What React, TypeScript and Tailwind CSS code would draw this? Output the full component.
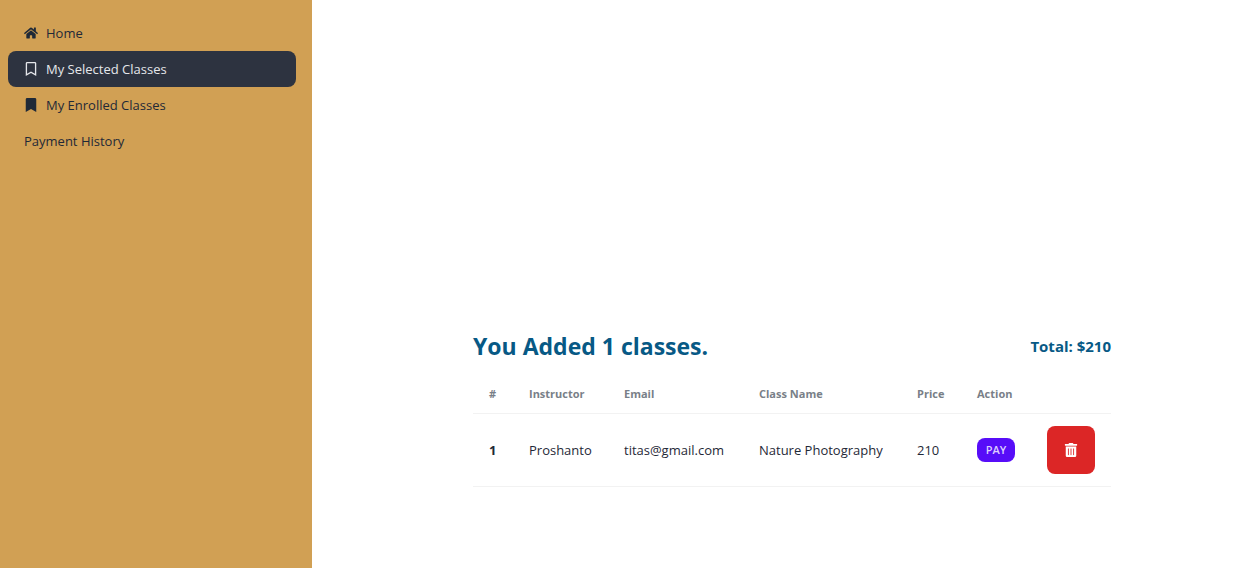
import type { ReactNode } from "react";
import { FaBookmark, FaHome, FaRegBookmark, FaTrashAlt } from "react-icons/fa";

type NavItem = { label: string; icon?: ReactNode; active?: boolean };

const navItems: NavItem[] = [
  { label: "Home", icon: <FaHome size={14} /> },
  { label: "My Selected Classes", icon: <FaRegBookmark size={14} />, active: true },
  { label: "My Enrolled Classes", icon: <FaBookmark size={14} /> },
  { label: "Payment History" },
];

const classes = [
  { instructor: "Proshanto", email: "titas@gmail.com", name: "Nature Photography", price: 210 },
];

function Sidebar() {
  return (
    <aside className="w-78 shrink-0 bg-[#d1a054] py-[15px] pr-4 pl-2">
      <nav>
        <ul className="flex flex-col">
          {navItems.map((item) => (
            <li key={item.label}>
              <a
                href="#"
                className={
                  item.active
                    ? "flex items-center gap-2 rounded-lg bg-[#2d3340] px-4 py-2 text-[#e5e7eb]"
                    : "flex items-center gap-2 rounded-lg px-4 py-2 text-[#1f2937]"
                }
              >
                {item.icon}
                {item.label}
              </a>
            </li>
          ))}
        </ul>
      </nav>
    </aside>
  );
}

export default function App() {
  const total = classes.reduce((sum, item) => sum + item.price, 0);

  return (
    <div className="flex min-h-screen bg-white font-['Open_Sans',sans-serif] text-[13px] leading-5 text-[#1f2937]">
      <Sidebar />
      <main className="flex flex-1 items-start justify-center pt-82 pl-[27px]">
        <section>
          <div className="flex items-center justify-between pb-2.5 font-bold text-[#075985]">
            <h1 className="text-[23px] leading-9">You Added {classes.length} classes.</h1>
            <p className="text-[15px]">Total: ${total}</p>
          </div>
          <table className="w-[638px] table-fixed text-left whitespace-nowrap">
            <colgroup>
              <col className="w-10" />
              <col className="w-[95px]" />
              <col className="w-[135px]" />
              <col className="w-[158px]" />
              <col className="w-15" />
              <col className="w-[70px]" />
              <col className="w-20" />
            </colgroup>
            <thead className="text-[11px] leading-4 text-[#797f88]">
              <tr className="border-b border-[#f2f2f2]">
                <th className="px-4 pt-3 pb-[11px]">#</th>
                <th className="px-4 pt-3 pb-[11px]">Instructor</th>
                <th className="px-4 pt-3 pb-[11px]">Email</th>
                <th className="px-4 pt-3 pb-[11px]">Class Name</th>
                <th className="px-4 pt-3 pb-[11px]">Price</th>
                <th className="px-4 pt-3 pb-[11px]">Action</th>
                <th aria-label="Delete" />
              </tr>
            </thead>
            <tbody>
              {classes.map((item, index) => (
                <tr key={item.email} className="border-b border-[#f2f2f2]">
                  <th className="px-4 py-3">{index + 1}</th>
                  <td className="px-4 py-3">{item.instructor}</td>
                  <td className="px-4 py-3">{item.email}</td>
                  <td className="px-4 py-3">{item.name}</td>
                  <td className="px-4 py-3">{item.price}</td>
                  <td className="px-4 py-3">
                    <button
                      type="button"
                      className="flex h-6 w-[38px] items-center justify-center rounded-lg bg-[#570df8] text-[11px] font-semibold text-[#ddcdfe]"
                    >
                      PAY
                    </button>
                  </td>
                  <td className="px-4 py-3">
                    <button
                      type="button"
                      aria-label={`Delete ${item.name}`}
                      className="flex size-12 items-center justify-center rounded-lg bg-[#dc2626] text-white"
                    >
                      <FaTrashAlt size={14} />
                    </button>
                  </td>
                </tr>
              ))}
            </tbody>
          </table>
        </section>
      </main>
    </div>
  );
}
